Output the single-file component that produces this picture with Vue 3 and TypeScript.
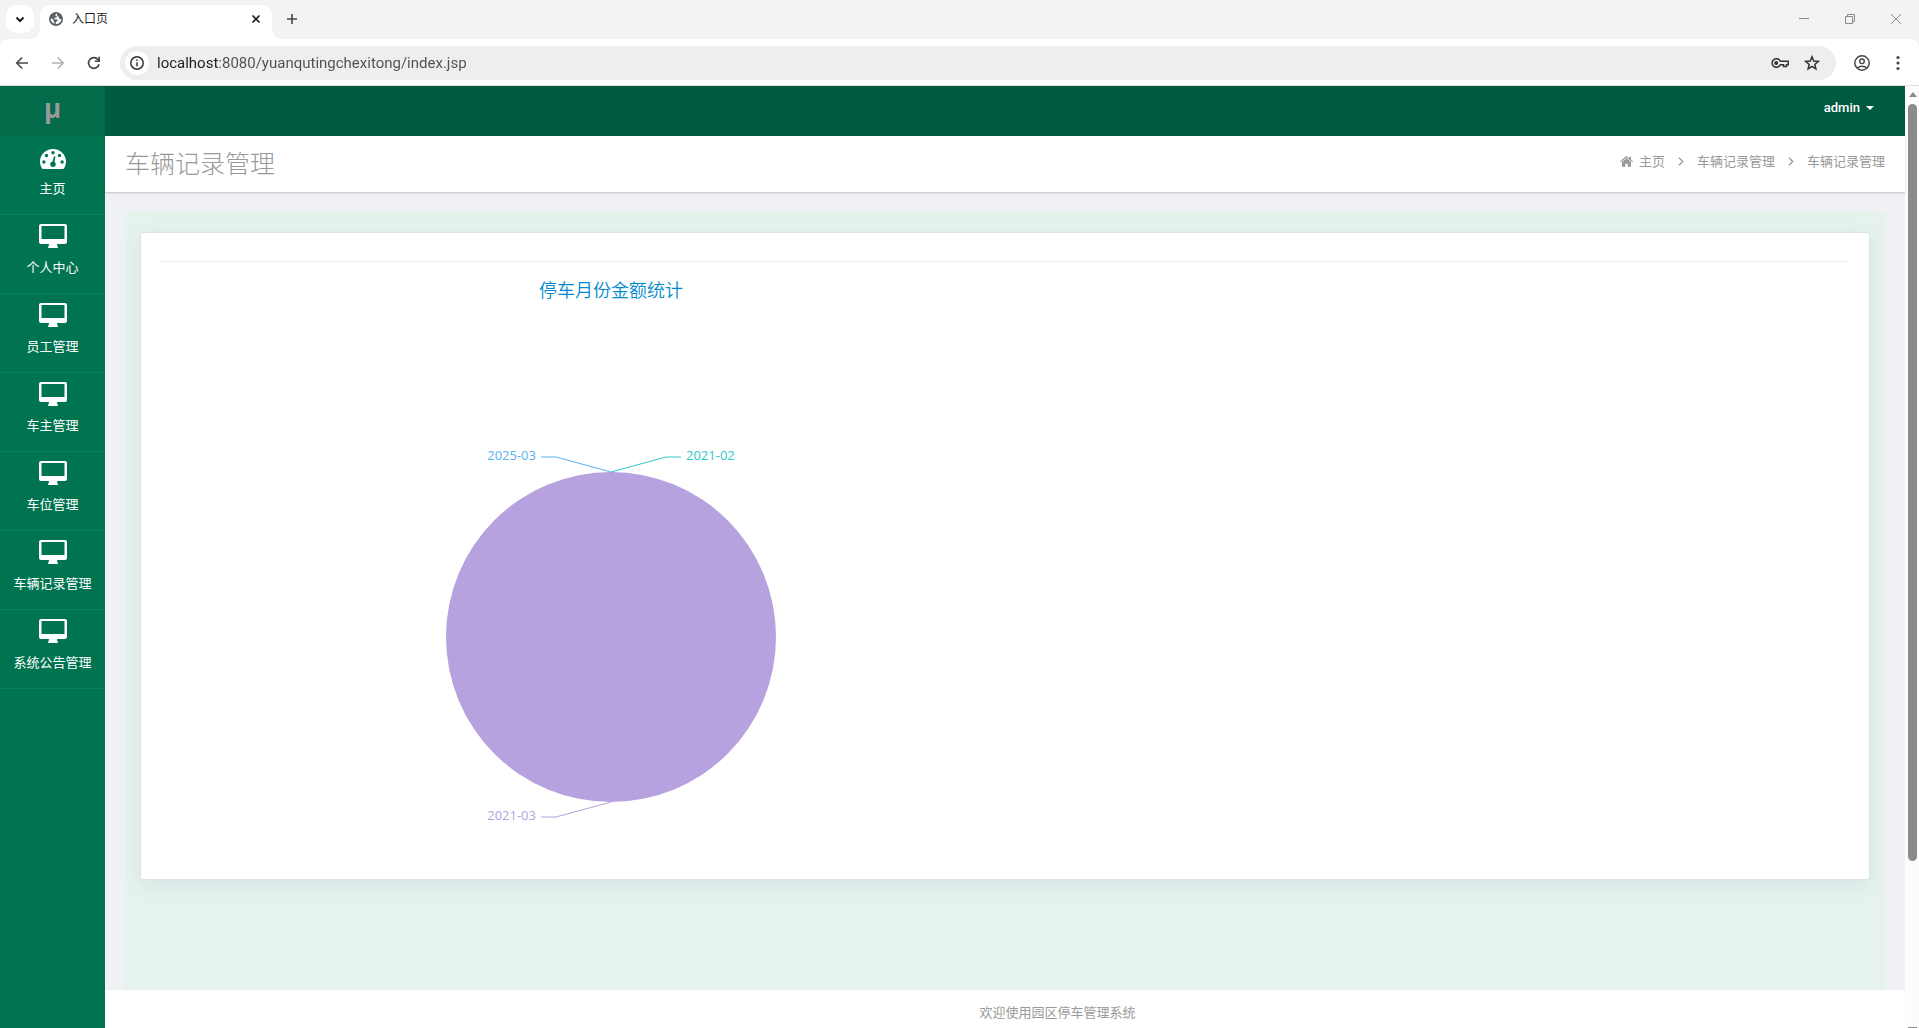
<script setup lang="ts">
import { ref } from 'vue'

interface MenuItem {
  label: string
  icon: 'dashboard' | 'desktop'
}

interface SliceLabel {
  name: string
  color: string
  points: string
  x: number
  y: number
  anchor: 'start' | 'end'
}

const address = ref('localhost:8080/yuanqutingchexitong/index.jsp')
const pageTitle = '车辆记录管理'

const menu: MenuItem[] = [
  { label: '主页', icon: 'dashboard' },
  { label: '个人中心', icon: 'desktop' },
  { label: '员工管理', icon: 'desktop' },
  { label: '车主管理', icon: 'desktop' },
  { label: '车位管理', icon: 'desktop' },
  { label: '车辆记录管理', icon: 'desktop' },
  { label: '系统公告管理', icon: 'desktop' },
]

const slices: SliceLabel[] = [
  { name: '2021-02', color: '#2ec7c9', points: '450,195 505,180 520,180', x: 525, y: 183, anchor: 'start' },
  { name: '2021-03', color: '#b6a2de', points: '450,525 395,540 380,540', x: 375, y: 543, anchor: 'end' },
  { name: '2025-03', color: '#5ab1ef', points: '450,195 395,180 380,180', x: 375, y: 183, anchor: 'end' },
]
</script>

<template>
  <div class="window">
    <div class="tabstrip">
      <button class="tab-search" aria-label="搜索标签页">
        <svg width="10" height="7" viewBox="0 0 10 7"><path d="M1.5 1.5 5 5l3.5-3.5" fill="none" stroke="#1f1f1f" stroke-width="2" /></svg>
      </button>
      <div class="tab">
        <svg width="14" height="14" viewBox="0 0 14 14">
          <circle cx="7" cy="7" r="7" fill="#5f6368" />
          <path d="M8 1.700C6.800 2 6 2.800 6.300 3.500c.3.700 1.500.3 1.600 1.100.1.900-.9 1.100-1.800 1.100-.9 0-1 .8-.5 1.200.9.600 2.600 0 3 1.200.3 1-.8 1.500-1.500 2-.5.400-.4 1.300-.4 2.200 3.100 0 5.500-2.300 5.600-5.200-.9.300-1.900.2-2.200-.5-.3-.8.200-1.400-.4-1.900-.7-.5-1.600-.4-1.600-1.300 0-.6.200-1.200-.1-1.700zM1.700 6.500c1 .1 2.400.5 2.800 1.300.3.600-.1 1.100.2 1.600.3.600.8.900.8 2.200C3.200 11 1.500 9.100 1.700 6.500z" fill="#fff" />
        </svg>
        <span class="tab-title">入口页</span>
        <button class="icon-btn tab-close" aria-label="关闭标签页">
          <svg width="10" height="10" viewBox="0 0 10 10"><path d="M1.500 1.500l7 7M8.500 1.500l-7 7" stroke="#1f1f1f" stroke-width="1.700" /></svg>
        </button>
      </div>
      <button class="icon-btn new-tab" aria-label="新标签页">
        <svg width="12" height="12" viewBox="0 0 12 12"><path d="M6 1v10M1 6h10" stroke="#474747" stroke-width="1.600" /></svg>
      </button>
      <div class="window-controls">
        <button class="icon-btn" aria-label="最小化">
          <svg width="12" height="12" viewBox="0 0 12 12"><path d="M1 5.500h10" stroke="#8b8b8b" /></svg>
        </button>
        <button class="icon-btn" aria-label="还原">
          <svg width="12" height="12" viewBox="0 0 12 12"><path d="M1.500 3.500h7v7h-7zM3.500 3.500v-2h7v7h-2" fill="none" stroke="#8b8b8b" /></svg>
        </button>
        <button class="icon-btn" aria-label="关闭">
          <svg width="12" height="12" viewBox="0 0 12 12"><path d="M1 1l10 10M11 1L1 11" stroke="#8b8b8b" /></svg>
        </button>
      </div>
    </div>

    <div class="toolbar">
      <button class="icon-btn nav" aria-label="后退">
        <svg width="14" height="14" viewBox="0 0 14 14"><path d="M13 7H2M7.200 1.500L1.700 7l5.500 5.500" fill="none" stroke="#474747" stroke-width="1.600" /></svg>
      </button>
      <button class="icon-btn nav" aria-label="前进" disabled>
        <svg width="14" height="14" viewBox="0 0 14 14"><path d="M1 7h11M6.800 1.500L12.300 7l-5.500 5.500" fill="none" stroke="#b3b3b3" stroke-width="1.600" /></svg>
      </button>
      <button class="icon-btn nav" aria-label="重新加载">
        <svg width="14" height="14" viewBox="0 0 14 14"><path d="M12 8.200A5.300 5.300 0 1 1 11 3.700L12.300 5" fill="none" stroke="#474747" stroke-width="1.700" /><path d="M13 .8v5.200H7.800V4.400h3.500V.8z" fill="#474747" /></svg>
      </button>
      <div class="omnibox">
        <button class="site-info" aria-label="查看网站信息">
          <svg width="14" height="14" viewBox="0 0 14 14"><circle cx="7" cy="7" r="6.200" fill="none" stroke="#333" stroke-width="1.500" /><path d="M7 6.200v4M7 3.500v1.500" stroke="#333" stroke-width="1.500" /></svg>
        </button>
        <input v-model="address" class="address" type="text" aria-label="地址" spellcheck="false" />
        <button class="icon-btn" aria-label="密码">
          <svg width="18" height="12" viewBox="0 0 18 12"><path d="M9.300 4.200A4.300 4.300 0 1 0 9.300 7.800h3.200v1.700h3V7.800h1.700V4.200z" fill="none" stroke="#333" stroke-width="1.500" /><circle cx="5.200" cy="6" r="2" fill="#333" /></svg>
        </button>
        <button class="icon-btn star" aria-label="为此标签页添加书签">
          <svg width="16" height="16" viewBox="0 0 16 16"><path d="M8 1.800l1.700 4.300 4.600.3-3.500 3 1.100 4.500L8 11.400l-3.900 2.500 1.100-4.500-3.500-3 4.600-.3z" fill="none" stroke="#333" stroke-width="1.500" /></svg>
        </button>
      </div>
      <button class="icon-btn profile" aria-label="用户">
        <svg width="16" height="16" viewBox="0 0 16 16"><circle cx="8" cy="8" r="7.200" fill="none" stroke="#474747" stroke-width="1.500" /><circle cx="8" cy="6.300" r="2.300" fill="none" stroke="#474747" stroke-width="1.400" /><path d="M3.200 13c2.600-2.500 7-2.500 9.600 0" fill="none" stroke="#474747" stroke-width="1.500" /></svg>
      </button>
      <button class="icon-btn more" aria-label="菜单">
        <svg width="4" height="16" viewBox="0 0 4 16" fill="#474747"><circle cx="2" cy="2.500" r="1.600" /><circle cx="2" cy="8" r="1.600" /><circle cx="2" cy="13.500" r="1.600" /></svg>
      </button>
    </div>

    <div class="viewport">
      <aside class="sidebar">
        <a class="logo" href="#">μ</a>
        <nav>
          <a v-for="item in menu" :key="item.label" class="menu-item" href="#">
            <svg v-if="item.icon === 'dashboard'" width="28" height="24" viewBox="0 0 28 24">
              <path d="M14 4C6.800 4 1 9.700 1 16.600c0 2.500.7 4.800 1.900 6.700.3.500.7.700 1.200.7h19.800c.5 0 .9-.2 1.200-.7 1.200-1.900 1.900-4.200 1.900-6.700C27 9.700 21.200 4 14 4z" fill="#fff" />
              <g fill="#007450">
                <circle cx="4.900" cy="17" r="1.700" /><circle cx="7.500" cy="10.500" r="1.700" /><circle cx="14" cy="7.700" r="1.700" /><circle cx="20.500" cy="10.500" r="1.700" /><circle cx="23.100" cy="17" r="1.700" />
                <circle cx="14" cy="19.300" r="2.700" /><path d="M13.200 18.500l1.700-7.200 1.500.4-1.400 7.500z" />
              </g>
            </svg>
            <svg v-else width="28" height="24" viewBox="0 0 28 24">
              <path d="M2 0h24a2 2 0 0 1 2 2v16a2 2 0 0 1-2 2h-8c0 1 .2 1.600.5 2.200.2.400.5.700.5 1.100 0 .4-.3.700-.7.700H9.700c-.4 0-.7-.3-.7-.7 0-.4.3-.7.5-1.100.3-.6.500-1.200.5-2.200H2a2 2 0 0 1-2-2V2a2 2 0 0 1 2-2zm.5 2v13h23V2z" fill="#fff" />
            </svg>
            <span>{{ item.label }}</span>
          </a>
        </nav>
      </aside>

      <div class="page">
        <header class="topbar">
          <button class="user">admin<i class="caret"></i></button>
        </header>

        <div class="heading">
          <h1>{{ pageTitle }}</h1>
          <nav class="crumbs" aria-label="面包屑">
            <a href="#">
              <svg width="13" height="11" viewBox="0 0 13 11" fill="#999"><path d="M6.500 2.300L11 6v4.200c0 .4-.2.600-.6.600H7.700V7.700H5.300v3.100H2.600c-.4 0-.6-.2-.6-.6V6z" /><path d="M6.500 0l2.700 2.200V.7H11v3l2 1.700-.7.800-5.800-4.800L.7 6.200 0 5.400 5.900.300z" /></svg>
              <span>主页</span>
            </a>
            <svg class="sep" width="6" height="9" viewBox="0 0 6 9"><path d="M1 .8l3.700 3.700L1 8.200" fill="none" stroke="#999" stroke-width="1.300" /></svg>
            <a href="#">车辆记录管理</a>
            <svg class="sep" width="6" height="9" viewBox="0 0 6 9"><path d="M1 .8l3.700 3.700L1 8.200" fill="none" stroke="#999" stroke-width="1.300" /></svg>
            <a href="#">{{ pageTitle }}</a>
          </nav>
        </div>

        <main class="content">
          <div class="panel">
            <section class="card">
              <hr />
              <svg class="chart" width="900" height="600" viewBox="0 0 900 600" role="img" aria-label="停车月份金额统计">
                <text class="chart-title" x="450" y="20" text-anchor="middle">停车月份金额统计</text>
                <circle cx="450" cy="360" r="165" fill="#b6a2de" />
                <g v-for="s in slices" :key="s.name">
                  <polyline :points="s.points" fill="none" :stroke="s.color" />
                  <text class="chart-label" :x="s.x" :y="s.y" :text-anchor="s.anchor" :fill="s.color">{{ s.name }}</text>
                </g>
              </svg>
            </section>
          </div>
        </main>

        <footer class="footer">欢迎使用园区停车管理系统</footer>
      </div>

      <div class="scrollbar">
        <i class="arrow-up"></i>
        <i class="thumb"></i>
        <i class="arrow-down"></i>
      </div>
    </div>
  </div>
</template>

<style>
body {
  margin: 0;
  overflow: hidden;
}
</style>

<style scoped>
* {
  box-sizing: border-box;
}
.window {
  display: flex;
  flex-direction: column;
  height: 100vh;
  background: #f4f3f1;
  font-family: 'Open Sans', 'Noto Sans CJK SC', sans-serif;
  font-size: 13px;
  color: #999;
}
svg {
  display: block;
  flex: none;
}
a {
  color: inherit;
  text-decoration: none;
}
button {
  border: 0;
  padding: 0;
  background: none;
  font: inherit;
  color: inherit;
}
.icon-btn {
  display: flex;
  align-items: center;
  justify-content: center;
}

/* browser tabs */
.tabstrip {
  display: flex;
  height: 39px;
  flex: none;
  padding: 5px 0 0 6px;
}
.tab-search {
  display: flex;
  align-items: center;
  justify-content: center;
  width: 28px;
  height: 28px;
  border-radius: 10px;
  background: #fff;
}
.tab {
  position: relative;
  display: flex;
  align-items: center;
  width: 232px;
  height: 34px;
  margin-left: 6px;
  padding: 0 11px 6px 9px;
  border-radius: 10px 10px 0 0;
  background: #fff;
}
.tab::before,
.tab::after {
  content: '';
  position: absolute;
  bottom: 0;
  width: 10px;
  height: 10px;
}
.tab::before {
  right: 100%;
  background: radial-gradient(circle at 0 0, #f4f3f1 10px, #fff 10px);
}
.tab::after {
  left: 100%;
  background: radial-gradient(circle at 100% 0, #f4f3f1 10px, #fff 10px);
}
.tab-title {
  flex: 1;
  margin-left: 9px;
  font-size: 12px;
  line-height: 16px;
  color: #1f1f1f;
}
.new-tab {
  width: 28px;
  height: 28px;
  margin-left: 6px;
}
.window-controls {
  display: flex;
  margin-left: auto;
}
.window-controls .icon-btn {
  width: 46px;
  height: 28px;
}

/* browser toolbar */
.toolbar {
  display: flex;
  align-items: center;
  height: 47px;
  flex: none;
  padding: 0 19px 0 4px;
  border-radius: 8px 8px 0 0;
  background: #fff;
  box-shadow: inset 0 -1px 0 #dfdfdf;
}
.nav {
  width: 36px;
  height: 34px;
}
.omnibox {
  display: flex;
  align-items: center;
  flex: 1;
  height: 34px;
  margin-left: 8px;
  padding: 0 16px 0 5px;
  border-radius: 17px;
  background: #efedee;
}
.site-info {
  display: flex;
  align-items: center;
  justify-content: center;
  width: 24px;
  height: 24px;
  border-radius: 12px;
  background: #fff;
}
.address {
  flex: 1;
  min-width: 0;
  margin: 0 8px;
  border: 0;
  padding: 0;
  outline: 0;
  font-family: Roboto, sans-serif;
  font-size: 15px;
  line-height: 20px;
  color: transparent;
  background: linear-gradient(90deg, #1f1f1f 62px, #4f4f4f 62px);
  background-clip: text;
}
.star {
  margin-left: 15px;
}
.profile {
  margin-left: 18px;
}
.more {
  margin-left: 26px;
}

/* application */
.viewport {
  display: flex;
  flex: 1;
  min-height: 0;
}
.sidebar {
  width: 105px;
  flex: none;
  background: #007450;
  overflow: hidden;
}
.logo {
  display: block;
  height: 50px;
  background: #036b4a;
  font-size: 26px;
  font-weight: 700;
  line-height: 44px;
  text-align: center;
  color: #999;
}
.menu-item {
  display: flex;
  flex-direction: column;
  align-items: center;
  gap: 9px;
  height: 79px;
  padding-top: 9px;
  border-bottom: 1px solid #077f5a;
  line-height: 20px;
  color: #fff;
}
.page {
  display: flex;
  flex-direction: column;
  flex: 1;
  min-width: 0;
}
.topbar {
  display: flex;
  justify-content: flex-end;
  height: 50px;
  flex: none;
  padding: 0 31px;
  background: #005a40;
}
.user {
  display: flex;
  align-items: center;
  height: 42px;
  font-family: Roboto, sans-serif;
  font-weight: 500;
  color: #fff;
}
.caret {
  margin: 2px 0 0 6px;
  border: 4px solid transparent;
  border-top-color: #fff;
  border-bottom: 0;
}
.heading {
  display: flex;
  align-items: center;
  justify-content: space-between;
  height: 56px;
  flex: none;
  padding: 0 20px 2px;
  background: #fff;
  box-shadow: 0 1px 2px rgba(0, 0, 0, 0.2);
  z-index: 1;
}
h1 {
  margin: 0;
  font-size: 25px;
  font-weight: 300;
  line-height: 36px;
}
.crumbs,
.crumbs a {
  display: flex;
  align-items: center;
  line-height: 20px;
}
.crumbs {
  padding-bottom: 4px;
}
.crumbs a {
  gap: 6px;
}
.sep {
  margin: 0 13px;
}
.content {
  display: flex;
  flex: 1;
  min-height: 0;
  padding: 20px 20px 0;
  background: #f0f1f5;
}
.panel {
  flex: 1;
  min-width: 0;
  padding: 20px 15px;
  background: #e6f3ec;
  overflow: hidden;
}
.card {
  padding: 0 20px 2px;
  border: 1px solid #dbe2ec;
  border-radius: 3px;
  background: #fff;
  box-shadow: 0 5px 20px rgba(69, 101, 173, 0.1);
}
hr {
  height: 1px;
  margin: 28px 0 15px;
  border: 0;
  background: #ececee;
}
.chart {
  max-width: 100%;
}
.chart-title {
  font-size: 18px;
  font-weight: 350;
  fill: #008acd;
}
.chart-label {
  font-size: 13px;
}
.footer {
  height: 38px;
  flex: none;
  padding: 12px 0 0 105px;
  background: #fff;
  line-height: 20px;
  text-align: center;
}
.scrollbar {
  display: flex;
  flex-direction: column;
  align-items: center;
  width: 14px;
  flex: none;
  padding-left: 1px;
  background: #fcfcfc;
}
.arrow-up {
  margin: 6px 0 7px;
  border: 4px solid transparent;
  border-top: 0;
  border-bottom: 5px solid #8b8b8b;
}
.thumb {
  width: 9px;
  flex: 0 0 calc(80% + 3px);
  border-radius: 5px;
  background: #8b8b8b;
}
.arrow-down {
  width: 9px;
  height: 1px;
  margin-top: auto;
  background: #8b8b8b;
}
</style>
